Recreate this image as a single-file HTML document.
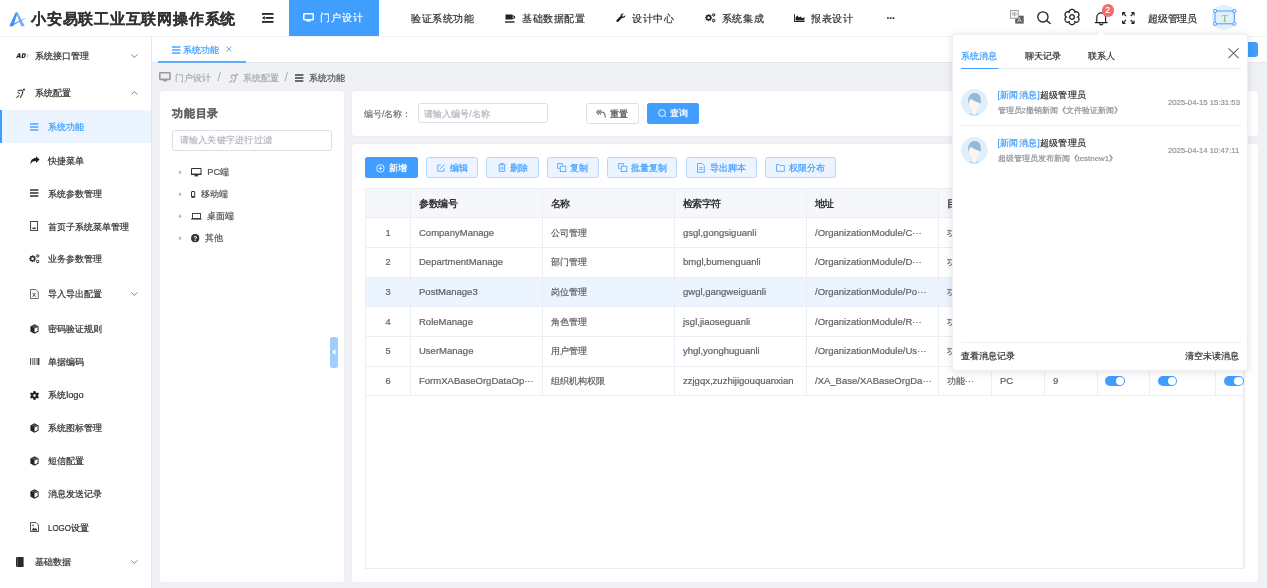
<!DOCTYPE html>
<html><head><meta charset="utf-8">
<style>
*{box-sizing:border-box;margin:0;padding:0}
html,body{width:1267px;height:588px;overflow:hidden;background:#eff1f4;font-family:"Liberation Sans",sans-serif;color:#303133}
.a{position:absolute}
.t{position:absolute;white-space:nowrap;line-height:1;-webkit-text-stroke:0.2px currentColor}
svg{position:absolute;overflow:visible}
#hdr{left:0;top:0;width:1267px;height:37.2px;background:#fff;border-bottom:1.5px solid #f0f2f5}
#side{left:0;top:37.2px;width:152px;height:552px;background:#fff;border-right:1px solid #e6e6e6}
#tabs{left:152px;top:37.2px;width:1115px;height:25.5px;background:#fff;border-bottom:1px solid #e4e7ed}
.card{position:absolute;background:#fff;border-radius:3px;box-shadow:0 0 1.5px rgba(0,0,0,0.07)}
.btn{position:absolute;height:21px;border-radius:2.5px;border:0.7px solid #b3d8ff;background:#ecf5ff}
.hm{font-size:10px;letter-spacing:0.58px;color:#303133}
.sm{font-size:9.24px;color:#303133}
.tb{font-size:9.24px;color:#606266}
.th{font-size:10px;letter-spacing:-0.45px;color:#303133;font-weight:bold;-webkit-text-stroke:0 !important}
.lat{display:inline-block;transform-origin:0 50%}
</style></head><body>

<div class="a" style="left:0;top:0;width:1267px;height:588px;will-change:transform">
<!-- HEADER -->
<div id="hdr" class="a"></div>
<svg style="left:9px;top:11.5px" width="17" height="15" viewBox="0 0 17 15">
  <path d="M0.3 14.3 L6.6 0.6 L8.6 0.6 L4.3 14.3 Z" fill="#3f8ff5"/>
  <path d="M6.8 0.6 L8.6 0.6 L15.8 14.3 L12.2 14.3 Z" fill="#5aa2f7" opacity="0.85"/>
  <path d="M1.2 13.6 C5 11.6 10 8.6 15.8 6.2 L15.9 6.7 C10.5 9.4 6 12.2 2.6 14.3 Z" fill="#3f8ff5"/>
</svg>
<div class="t" style="left:31px;top:10.5px;font-size:15px;letter-spacing:0.78px;font-weight:bold;color:#333">小安易联工业互联网操作系统</div>
<svg style="left:262px;top:13px" width="12" height="10" viewBox="0 0 12 10">
  <rect x="0" y="0" width="11.5" height="1.8" fill="#222"/>
  <rect x="3.5" y="4" width="8" height="1.8" fill="#222"/>
  <rect x="0" y="8" width="11.5" height="1.8" fill="#222"/>
  <path d="M0 4.9 L2.8 3 L2.8 6.8 Z" fill="#222"/>
</svg>
<div class="a" style="left:289px;top:0;width:90px;height:35.7px;background:#409eff"></div>
<svg style="left:303px;top:12.5px" width="11" height="9" viewBox="0 0 11 9">
  <rect x="0.8" y="0.8" width="9.4" height="6" rx="0.6" fill="none" stroke="#fff" stroke-width="1.5"/>
  <rect x="3.5" y="7" width="4" height="1.6" fill="#fff"/>
</svg>
<div class="t hm" style="left:320px;top:12.6px;color:#fff;font-size:10px;letter-spacing:0.9px">门户设计</div>
<div class="t hm" style="left:411px;top:13.8px">验证系统功能</div>
<svg style="left:504.5px;top:13.5px" width="10" height="9" viewBox="0 0 10 9">
  <path d="M0.5 0.5 H7.5 V1.6 H8.6 A1.6 1.6 0 0 1 8.6 4.8 H7.5 V5.6 H0.5 Z M7.5 2.6 V3.8 H8.4 A0.6 0.6 0 0 0 8.4 2.6 Z" fill="#222"/>
  <rect x="0" y="7.3" width="9.5" height="1.4" fill="#222"/>
</svg>
<div class="t hm" style="left:522px;top:13.8px">基础数据配置</div>
<svg style="left:615.5px;top:13px" width="10" height="10" viewBox="0 0 10 10">
  <path d="M9.3 2.2 L7.6 3.6 L6.4 3.4 L6.2 2.2 L7.8 0.6 C6.3 -0.1 4.4 0.9 4.5 2.9 L0.6 6.9 C-0.2 7.7 0.9 9.6 2 8.9 L6 5 C8.1 5.2 9.8 3.8 9.3 2.2 Z" fill="#222"/>
</svg>
<div class="t hm" style="left:632.3px;top:13.8px">设计中心</div>
<svg style="left:704.6px;top:13px" width="11" height="10" viewBox="0 0 11 10"><path d="M3.60 1.10 L4.30 1.17 L4.67 2.11 L5.16 2.37 L6.15 2.15 L6.59 2.70 L6.19 3.63 L6.35 4.15 L7.20 4.70 L7.13 5.40 L6.19 5.77 L5.93 6.26 L6.15 7.25 L5.60 7.69 L4.67 7.29 L4.15 7.45 L3.60 8.30 L2.90 8.23 L2.53 7.29 L2.04 7.03 L1.05 7.25 L0.61 6.70 L1.01 5.77 L0.85 5.25 L0.00 4.70 L0.07 4.00 L1.01 3.63 L1.27 3.14 L1.05 2.15 L1.60 1.71 L2.53 2.11 L3.05 1.95Z M4.90 4.70 A1.3 1.3 0 1 0 2.30 4.70 A1.3 1.3 0 1 0 4.90 4.70 Z" fill="#222" fill-rule="evenodd"/><path d="M8.70 0.10 L9.17 0.16 L9.38 0.73 L9.65 0.95 L10.26 1.00 L10.44 1.43 L10.05 1.90 L10.00 2.25 L10.26 2.80 L9.97 3.17 L9.38 3.07 L9.05 3.20 L8.70 3.70 L8.23 3.64 L8.03 3.07 L7.75 2.85 L7.14 2.80 L6.96 2.37 L7.35 1.90 L7.40 1.55 L7.14 1.00 L7.43 0.63 L8.02 0.73 L8.35 0.60Z M9.35 1.90 A0.65 0.65 0 1 0 8.05 1.90 A0.65 0.65 0 1 0 9.35 1.90 Z" fill="#222" fill-rule="evenodd"/><path d="M8.70 5.70 L9.17 5.76 L9.38 6.33 L9.65 6.55 L10.26 6.60 L10.44 7.03 L10.05 7.50 L10.00 7.85 L10.26 8.40 L9.97 8.77 L9.38 8.67 L9.05 8.80 L8.70 9.30 L8.23 9.24 L8.03 8.67 L7.75 8.45 L7.14 8.40 L6.96 7.97 L7.35 7.50 L7.40 7.15 L7.14 6.60 L7.43 6.23 L8.02 6.33 L8.35 6.20Z M9.35 7.50 A0.65 0.65 0 1 0 8.05 7.50 A0.65 0.65 0 1 0 9.35 7.50 Z" fill="#222" fill-rule="evenodd"/></svg>
<div class="t hm" style="left:721.8px;top:13.8px">系统集成</div>
<svg style="left:794px;top:13.5px" width="11" height="8" viewBox="0 0 11 8">
  <path d="M0 0 H0.9 V7 H10.6 V8 H0 Z" fill="#222"/>
  <path d="M1.6 6.6 V3.2 L3.4 1.6 L5 3.4 L6.6 2.6 L8.4 4.2 L10.4 3 V6.6 Z" fill="#222"/>
</svg>
<div class="t hm" style="left:811.3px;top:13.8px">报表设计</div>
<div class="t" style="left:886.5px;top:14px;font-size:10px;font-weight:bold;color:#333;letter-spacing:-0.6px">···</div>

<!-- header right icons -->
<svg style="left:1010px;top:10.3px" width="14" height="14" viewBox="0 0 14 14">
  <rect x="5.2" y="5.7" width="8.5" height="7.9" fill="#5d5f63"/>
  <path d="M9.45 7.4 L7.6 12.2 M9.45 7.4 L11.3 12.2 M8.3 10.6 H10.6" stroke="#e8e8e8" stroke-width="0.7"/>
  <rect x="0.6" y="0.6" width="7.6" height="7.6" fill="#fff" stroke="#9a9a9a" stroke-width="1"/>
  <path d="M2.6 3 H6.2 V5 H2.6 Z M4.4 1.9 V6.6" fill="none" stroke="#8a9ab0" stroke-width="0.7"/>
</svg>
<svg style="left:1037px;top:10.8px" width="14" height="13" viewBox="0 0 14 13">
  <circle cx="5.9" cy="5.9" r="5.1" fill="none" stroke="#222" stroke-width="1.3"/>
  <path d="M9.6 9.4 L13.2 12.6" stroke="#222" stroke-width="1.3" stroke-linecap="round"/>
</svg>
<svg style="left:1064px;top:9px" width="16" height="16" viewBox="0 0 16 16"><path d="M8.00 0.40 L8.26 0.41 L8.53 0.45 L8.79 0.50 L9.04 0.58 L9.29 0.69 L9.53 0.81 L9.75 0.96 L9.97 1.13 L10.17 1.33 L10.35 1.54 L10.51 1.79 L10.65 2.06 L10.75 2.36 L10.80 2.73 L10.65 3.41 L11.16 2.94 L11.51 2.80 L11.82 2.74 L12.13 2.72 L12.42 2.74 L12.70 2.79 L12.96 2.86 L13.22 2.96 L13.46 3.08 L13.69 3.23 L13.90 3.39 L14.10 3.57 L14.28 3.77 L14.44 3.98 L14.58 4.20 L14.70 4.44 L14.81 4.68 L14.89 4.93 L14.94 5.19 L14.98 5.46 L14.99 5.73 L14.97 6.00 L14.93 6.27 L14.86 6.54 L14.77 6.81 L14.64 7.07 L14.47 7.32 L14.25 7.56 L13.96 7.79 L13.30 8.00 L13.96 8.21 L14.25 8.44 L14.47 8.68 L14.64 8.93 L14.77 9.19 L14.86 9.46 L14.93 9.73 L14.97 10.00 L14.99 10.27 L14.98 10.54 L14.94 10.81 L14.89 11.07 L14.81 11.32 L14.70 11.56 L14.58 11.80 L14.44 12.02 L14.28 12.23 L14.10 12.43 L13.90 12.61 L13.69 12.77 L13.46 12.92 L13.22 13.04 L12.96 13.14 L12.70 13.21 L12.42 13.26 L12.13 13.28 L11.82 13.26 L11.51 13.20 L11.16 13.06 L10.65 12.59 L10.80 13.27 L10.75 13.64 L10.65 13.94 L10.51 14.21 L10.35 14.46 L10.17 14.67 L9.97 14.87 L9.75 15.04 L9.53 15.19 L9.29 15.31 L9.04 15.42 L8.79 15.50 L8.53 15.55 L8.26 15.59 L8.00 15.60 L7.74 15.59 L7.47 15.55 L7.21 15.50 L6.96 15.42 L6.71 15.31 L6.47 15.19 L6.25 15.04 L6.03 14.87 L5.83 14.67 L5.65 14.46 L5.49 14.21 L5.35 13.94 L5.25 13.64 L5.20 13.27 L5.35 12.59 L4.84 13.06 L4.49 13.20 L4.18 13.26 L3.87 13.28 L3.58 13.26 L3.30 13.21 L3.04 13.14 L2.78 13.04 L2.54 12.92 L2.31 12.77 L2.10 12.61 L1.90 12.43 L1.72 12.23 L1.56 12.02 L1.42 11.80 L1.30 11.56 L1.19 11.32 L1.11 11.07 L1.06 10.81 L1.02 10.54 L1.01 10.27 L1.03 10.00 L1.07 9.73 L1.14 9.46 L1.23 9.19 L1.36 8.93 L1.53 8.68 L1.75 8.44 L2.04 8.21 L2.70 8.00 L2.04 7.79 L1.75 7.56 L1.53 7.32 L1.36 7.07 L1.23 6.81 L1.14 6.54 L1.07 6.27 L1.03 6.00 L1.01 5.73 L1.02 5.46 L1.06 5.19 L1.11 4.93 L1.19 4.68 L1.30 4.44 L1.42 4.20 L1.56 3.98 L1.72 3.77 L1.90 3.57 L2.10 3.39 L2.31 3.23 L2.54 3.08 L2.78 2.96 L3.04 2.86 L3.30 2.79 L3.58 2.74 L3.87 2.72 L4.18 2.74 L4.49 2.80 L4.84 2.94 L5.35 3.41 L5.20 2.73 L5.25 2.36 L5.35 2.06 L5.49 1.79 L5.65 1.54 L5.83 1.33 L6.03 1.13 L6.25 0.96 L6.47 0.81 L6.71 0.69 L6.96 0.58 L7.21 0.50 L7.47 0.45 L7.74 0.41 L8.00 0.40Z" fill="none" stroke="#222" stroke-width="1.3" stroke-linejoin="round"/><circle cx="8" cy="8" r="2.3" fill="none" stroke="#222" stroke-width="1.3"/></svg>
<svg style="left:1094.5px;top:11px" width="13" height="14" viewBox="0 0 13 14">
  <path d="M1.8 11.5 V6.2 A4.4 4.4 0 0 1 10.6 6.2 V11.5 M0.3 11.6 H12.2" fill="none" stroke="#222" stroke-width="1.2" stroke-linecap="round"/>
  <path d="M4.6 12.2 A1.6 1.6 0 0 0 7.8 12.2" fill="none" stroke="#222" stroke-width="1.2"/>
</svg>
<div class="a" style="left:1101.8px;top:4.4px;width:12.3px;height:12.3px;border-radius:50%;background:#f56c6c"></div>
<div class="t" style="left:1105.3px;top:6.3px;font-size:8.6px;color:#fff">2</div>
<svg style="left:1122px;top:11.5px" width="13" height="12" viewBox="0 0 13 12">
  <path d="M0.6 0.6 L4 4 M0.6 0.6 H3.4 M0.6 0.6 V3.4 M12.1 0.6 L8.7 4 M12.1 0.6 H9.3 M12.1 0.6 V3.4 M0.6 11.4 L4 8 M0.6 11.4 H3.4 M0.6 11.4 V8.6 M12.1 11.4 L8.7 8 M12.1 11.4 H9.3 M12.1 11.4 V8.6" fill="none" stroke="#222" stroke-width="1.1"/>
</svg>
<div class="t sm" style="left:1148px;top:13.5px;font-size:10px;letter-spacing:-0.25px">超级管理员</div>
<div class="a" style="left:1211.6px;top:4.9px;width:24.8px;height:24.8px;border-radius:50%;background:#e3effc"></div>
<svg style="left:1212.6px;top:9.3px" width="23" height="17" viewBox="0 0 23 17">
  <rect x="2" y="2" width="19.3" height="12.8" fill="none" stroke="#409eff" stroke-width="1"/>
  <circle cx="2" cy="2" r="1.7" fill="#e3effc" stroke="#409eff" stroke-width="0.9"/>
  <circle cx="21.3" cy="2" r="1.7" fill="#e3effc" stroke="#409eff" stroke-width="0.9"/>
  <circle cx="2" cy="14.8" r="1.7" fill="#e3effc" stroke="#409eff" stroke-width="0.9"/>
  <circle cx="21.3" cy="14.8" r="1.7" fill="#e3effc" stroke="#409eff" stroke-width="0.9"/>
  <text x="11.6" y="12.6" font-size="10.5" text-anchor="middle" fill="#72c76e" font-family="Liberation Serif">T</text>
</svg>

<!-- SIDEBAR -->
<div id="side" class="a"></div>
<div class="a" style="left:0;top:110px;width:151px;height:32.6px;background:#ecf5ff"></div>
<div class="a" style="left:0;top:110px;width:2.2px;height:32.6px;background:#409eff"></div>
<div class="t sm" style="left:34.9px;top:51.80px;color:#303133">系统接口管理</div>
<svg style="left:15.5px;top:52.80px" width="12" height="6" viewBox="0 0 12 6"><path d="M0 5 L2.6 0.2 H4.2 L4.6 5 H3.3 L3.2 4 H1.9 L1.4 5 Z M2.3 3.1 H3.1 L3 1.5 Z" fill="#222"/><path d="M5.4 5 L6.3 0.2 H8.2 C9.8 0.2 10 1.6 9.6 2.7 C9.2 4 8.4 5 6.9 5 Z M6.8 3.9 H7.3 C8 3.9 8.3 3.3 8.4 2.6 C8.5 1.8 8.3 1.3 7.7 1.3 H7.4 Z" fill="#222"/><path d="M10.6 0.8 A2.4 2.4 0 0 1 10.6 4.4" fill="none" stroke="#aaa" stroke-width="0.7"/><path d="M11.5 0.6 A2.8 2.8 0 0 1 11.5 4.6" fill="none" stroke="#ccc" stroke-width="0.6"/></svg>
<svg style="left:130.8px;top:53.50px" width="7" height="4" viewBox="0 0 7 4"><path d="M0.4 0.4 L3.4 3.4 L6.4 0.4" fill="none" stroke="#666" stroke-width="0.8"/></svg>
<div class="t sm" style="left:34.9px;top:89.10px;color:#303133">系统配置</div>
<svg style="left:15.5px;top:87.80px" width="10" height="10" viewBox="0 0 10 10"><circle cx="8" cy="1.6" r="1.1" fill="#444"/><path d="M2.2 2.8 C4 2 6 2 6.8 3.2 C7 5.2 5.6 7.6 4.4 9.4 M2 4.4 L3.4 5.6 M0.8 9.4 L2.8 7.6" fill="none" stroke="#444" stroke-width="1.1" stroke-linecap="round"/></svg>
<svg style="left:130.8px;top:90.60px" width="7" height="4" viewBox="0 0 7 4"><path d="M0.4 3.6 L3.4 0.6 L6.4 3.6" fill="none" stroke="#666" stroke-width="0.8"/></svg>
<div class="t sm" style="left:48.2px;top:123.40px;color:#409eff">系统功能</div>
<svg style="left:30.3px;top:123.1px" width="9" height="8" viewBox="0 0 9 8"><rect x="0" y="0.3" width="8.4" height="1.4" fill="#409eff"/><rect x="0" y="3.3" width="8.4" height="1.4" fill="#409eff"/><rect x="0" y="6.3" width="8.4" height="1.4" fill="#409eff"/></svg>
<div class="t sm" style="left:48.2px;top:156.60px;color:#303133">快捷菜单</div>
<svg style="left:30.0px;top:155.80px" width="10" height="9" viewBox="0 0 10 9"><path d="M9.6 3.6 L6 0.2 V2.1 C2.4 2.1 0.4 4.2 0.4 8.6 C1.4 6.2 3 5.1 6 5.1 V7 Z" fill="#222"/></svg>
<div class="t sm" style="left:48.2px;top:189.50px;color:#303133">系统参数管理</div>
<svg style="left:30.3px;top:189.2px" width="9" height="8" viewBox="0 0 9 8"><rect x="0" y="0.3" width="8.4" height="1.4" fill="#222"/><rect x="0" y="3.3" width="8.4" height="1.4" fill="#222"/><rect x="0" y="6.3" width="8.4" height="1.4" fill="#222"/></svg>
<div class="t sm" style="left:48.2px;top:222.50px;color:#303133">首页子系统菜单管理</div>
<svg style="left:30.0px;top:221.20px" width="9" height="10" viewBox="0 0 9 10"><rect x="0.6" y="0.5" width="7" height="9" fill="none" stroke="#333" stroke-width="0.9"/><rect x="2.4" y="6.6" width="3.4" height="1.4" fill="#333"/></svg>
<div class="t sm" style="left:48.2px;top:255.40px;color:#303133">业务参数管理</div>
<svg style="left:29.1px;top:253.80px" width="11" height="10" viewBox="0 0 11 10"><path d="M3.60 1.10 L4.30 1.17 L4.67 2.11 L5.16 2.37 L6.15 2.15 L6.59 2.70 L6.19 3.63 L6.35 4.15 L7.20 4.70 L7.13 5.40 L6.19 5.77 L5.93 6.26 L6.15 7.25 L5.60 7.69 L4.67 7.29 L4.15 7.45 L3.60 8.30 L2.90 8.23 L2.53 7.29 L2.04 7.03 L1.05 7.25 L0.61 6.70 L1.01 5.77 L0.85 5.25 L0.00 4.70 L0.07 4.00 L1.01 3.63 L1.27 3.14 L1.05 2.15 L1.60 1.71 L2.53 2.11 L3.05 1.95Z M4.90 4.70 A1.3 1.3 0 1 0 2.30 4.70 A1.3 1.3 0 1 0 4.90 4.70 Z" fill="#333" fill-rule="evenodd"/><path d="M8.70 0.10 L9.17 0.16 L9.38 0.73 L9.65 0.95 L10.26 1.00 L10.44 1.43 L10.05 1.90 L10.00 2.25 L10.26 2.80 L9.97 3.17 L9.38 3.07 L9.05 3.20 L8.70 3.70 L8.23 3.64 L8.03 3.07 L7.75 2.85 L7.14 2.80 L6.96 2.37 L7.35 1.90 L7.40 1.55 L7.14 1.00 L7.43 0.63 L8.02 0.73 L8.35 0.60Z M9.35 1.90 A0.65 0.65 0 1 0 8.05 1.90 A0.65 0.65 0 1 0 9.35 1.90 Z" fill="#333" fill-rule="evenodd"/><path d="M8.70 5.70 L9.17 5.76 L9.38 6.33 L9.65 6.55 L10.26 6.60 L10.44 7.03 L10.05 7.50 L10.00 7.85 L10.26 8.40 L9.97 8.77 L9.38 8.67 L9.05 8.80 L8.70 9.30 L8.23 9.24 L8.03 8.67 L7.75 8.45 L7.14 8.40 L6.96 7.97 L7.35 7.50 L7.40 7.15 L7.14 6.60 L7.43 6.23 L8.02 6.33 L8.35 6.20Z M9.35 7.50 A0.65 0.65 0 1 0 8.05 7.50 A0.65 0.65 0 1 0 9.35 7.50 Z" fill="#333" fill-rule="evenodd"/></svg>
<div class="t sm" style="left:48.2px;top:290.30px;color:#303133">导入导出配置</div>
<svg style="left:30.0px;top:289.00px" width="9" height="10" viewBox="0 0 9 10"><path d="M0.5 0.5 H5.8 L8.3 3 V9.5 H0.5 Z" fill="none" stroke="#444" stroke-width="0.8"/><path d="M2.6 3.8 L5.6 7.8 M5.6 3.8 L2.6 7.8" stroke="#444" stroke-width="0.9"/></svg>
<svg style="left:130.8px;top:292.00px" width="7" height="4" viewBox="0 0 7 4"><path d="M0.4 0.4 L3.4 3.4 L6.4 0.4" fill="none" stroke="#666" stroke-width="0.8"/></svg>
<div class="t sm" style="left:48.2px;top:324.90px;color:#303133">密码验证规则</div>
<svg style="left:30.0px;top:323.60px" width="9" height="10" viewBox="0 0 9 10"><path d="M4.5 0.3 L8.6 2.4 V7.6 L4.5 9.7 L0.4 7.6 V2.4 Z" fill="#222"/><path d="M4.5 4.6 V8.6 L7.6 7 V3 Z" fill="#fff"/><path d="M1.4 2.6 L4.5 1.2 L7.6 2.6 L4.5 4 Z" fill="#fff" opacity="0.25"/></svg>
<div class="t sm" style="left:48.2px;top:358.10px;color:#303133">单据编码</div>
<svg style="left:30.0px;top:358.30px" width="10" height="7" viewBox="0 0 10 7"><rect x="0" y="0" width="1" height="7" fill="#555"/><rect x="1.8" y="0" width="1" height="7" fill="#777"/><rect x="3.6" y="0" width="1.2" height="7" fill="#666"/><rect x="5.6" y="0" width="1" height="7" fill="#888"/><rect x="7.4" y="0" width="2" height="7" fill="#444"/></svg>
<div class="t sm" style="left:48.2px;top:391.30px;color:#303133">系统logo</div>
<svg style="left:30.0px;top:390.50px" width="9" height="9" viewBox="0 0 9 9"><path d="M3.6 0 H5.4 L5.7 1.4 L6.8 2 L8.1 1.5 L9 3.1 L8 4 V5 L9 5.9 L8.1 7.5 L6.8 7 L5.7 7.6 L5.4 9 H3.6 L3.3 7.6 L2.2 7 L0.9 7.5 L0 5.9 L1 5 V4 L0 3.1 L0.9 1.5 L2.2 2 L3.3 1.4 Z" fill="#222"/><circle cx="4.5" cy="4.5" r="1.3" fill="#fff"/></svg>
<div class="t sm" style="left:48.2px;top:424.30px;color:#303133">系统图标管理</div>
<svg style="left:30.0px;top:423.00px" width="9" height="10" viewBox="0 0 9 10"><path d="M4.5 0.3 L8.6 2.4 V7.6 L4.5 9.7 L0.4 7.6 V2.4 Z" fill="#222"/><path d="M4.5 4.6 V8.6 L7.6 7 V3 Z" fill="#fff"/><path d="M1.4 2.6 L4.5 1.2 L7.6 2.6 L4.5 4 Z" fill="#fff" opacity="0.25"/></svg>
<div class="t sm" style="left:48.2px;top:457.40px;color:#303133">短信配置</div>
<svg style="left:30.0px;top:456.10px" width="9" height="10" viewBox="0 0 9 10"><path d="M4.5 0.3 L8.6 2.4 V7.6 L4.5 9.7 L0.4 7.6 V2.4 Z" fill="#222"/><path d="M4.5 4.6 V8.6 L7.6 7 V3 Z" fill="#fff"/><path d="M1.4 2.6 L4.5 1.2 L7.6 2.6 L4.5 4 Z" fill="#fff" opacity="0.25"/></svg>
<div class="t sm" style="left:48.2px;top:490.40px;color:#303133">消息发送记录</div>
<svg style="left:30.0px;top:489.10px" width="9" height="10" viewBox="0 0 9 10"><path d="M4.5 0.3 L8.6 2.4 V7.6 L4.5 9.7 L0.4 7.6 V2.4 Z" fill="#222"/><path d="M4.5 4.6 V8.6 L7.6 7 V3 Z" fill="#fff"/><path d="M1.4 2.6 L4.5 1.2 L7.6 2.6 L4.5 4 Z" fill="#fff" opacity="0.25"/></svg>
<div class="t sm" style="left:48.2px;top:523.50px;color:#303133"><span class="lat" style="transform:scaleX(0.86);margin-right:-3.8px">LOGO</span>设置</div>
<svg style="left:30.0px;top:522.20px" width="9" height="10" viewBox="0 0 9 10"><path d="M0.5 0.5 H6 L8.5 3 V9.5 H0.5 Z" fill="none" stroke="#444" stroke-width="0.9"/><path d="M1.5 8.5 L3.5 5.5 L5 7 L6 6 L7.5 8.5 Z" fill="#333"/><circle cx="3" cy="3.2" r="0.8" fill="#333"/></svg>
<div class="t sm" style="left:34.9px;top:558.30px;color:#303133">基础数据</div>
<svg style="left:15.5px;top:557.00px" width="8" height="10" viewBox="0 0 8 10"><path d="M1.2 0 H7.6 V10 H1.2 C0.4 10 0 9.5 0 8.8 V1.2 C0 0.5 0.4 0 1.2 0 Z" fill="#2a2a2a"/><rect x="1.2" y="0.6" width="0.6" height="8.8" fill="#777"/></svg>
<svg style="left:130.8px;top:560.00px" width="7" height="4" viewBox="0 0 7 4"><path d="M0.4 0.4 L3.4 3.4 L6.4 0.4" fill="none" stroke="#666" stroke-width="0.8"/></svg>

<!-- TABS -->
<div id="tabs" class="a"></div>
<svg style="left:171.5px;top:46.3px" width="9" height="8" viewBox="0 0 9 8"><rect x="0" y="0.3" width="8.4" height="1.4" fill="#409eff"/><rect x="0" y="3.3" width="8.4" height="1.4" fill="#409eff"/><rect x="0" y="6.3" width="8.4" height="1.4" fill="#409eff"/></svg>
<div class="t sm" style="left:183px;top:46.2px;font-size:9.24px;color:#409eff">系统功能</div>
<svg style="left:226px;top:45.5px" width="6" height="6" viewBox="0 0 6 6"><path d="M0.5 0.5 L5.5 5.5 M5.5 0.5 L0.5 5.5" stroke="#409eff" stroke-width="0.8"/></svg>
<div class="a" style="left:158.3px;top:61px;width:87.3px;height:2px;background:#5eacff"></div>
<div class="a" style="left:1220px;top:41.8px;width:38.3px;height:15.5px;border-radius:3px;background:#409eff"></div>

<!-- CONTENT -->
<svg style="left:159.4px;top:72.4px" width="12" height="10" viewBox="0 0 12 10"><rect x="0.8" y="0.8" width="10.2" height="6.6" rx="0.5" fill="#eceef1" stroke="#9a9a9a" stroke-width="1.6"/><rect x="4" y="7.8" width="4" height="1.6" fill="#9a9a9a"/></svg>
<div class="t sm" style="left:175.2px;top:73.7px;color:#a8abb2">门户设计</div>
<div class="t" style="left:217.4px;top:71.4px;font-size:12.5px;color:#a9acb1;-webkit-text-stroke:0">/</div>
<svg style="left:228.5px;top:72.5px" width="10" height="10" viewBox="0 0 10 10"><circle cx="8" cy="1.6" r="1.1" fill="#a5a5a5"/><path d="M2.2 2.8 C4 2 6 2 6.8 3.2 C7 5.2 5.6 7.6 4.4 9.4 M2 4.4 L3.4 5.6 M0.8 9.4 L2.8 7.6" fill="none" stroke="#a5a5a5" stroke-width="1.1" stroke-linecap="round"/></svg>
<div class="t sm" style="left:243.2px;top:73.7px;color:#a8abb2">系统配置</div>
<div class="t" style="left:284.4px;top:71.4px;font-size:12.5px;color:#a9acb1;-webkit-text-stroke:0">/</div>
<svg style="left:295.4px;top:73.5px" width="9" height="8" viewBox="0 0 9 8"><rect x="0" y="0.3" width="8.4" height="1.4" fill="#333"/><rect x="0" y="3.3" width="8.4" height="1.4" fill="#333"/><rect x="0" y="6.3" width="8.4" height="1.4" fill="#333"/></svg>
<div class="t sm" style="left:309.1px;top:73.7px;color:#505256">系统功能</div>
<div class="card" style="left:160px;top:90.8px;width:184px;height:491.2px"></div>
<div class="t" style="left:172.4px;top:107.8px;font-size:11px;letter-spacing:0.6px;font-weight:bold;color:#606266">功能目录</div>
<div class="a" style="left:172.4px;top:130.3px;width:159.4px;height:20.4px;border:0.8px solid #dcdfe6;border-radius:2.5px;background:#fff"></div>
<div class="t sm" style="left:179.8px;top:136.2px;font-size:9px;letter-spacing:0.22px;color:#b4b7bd">请输入关键字进行过滤</div>
<svg style="left:179.2px;top:169.80px" width="3" height="5" viewBox="0 0 3 5"><path d="M0 0 L2.8 2.2 L0 4.4 Z" fill="#b5b8bd"/></svg>
<svg style="left:191px;top:168.20px" width="11" height="9" viewBox="0 0 11 9"><path d="M0.5 0.5 H10 V6.4 H0.5 Z" fill="none" stroke="#333" stroke-width="1"/><rect x="0" y="5.6" width="10.5" height="1.4" fill="#333"/><rect x="3.5" y="7" width="3.6" height="1.4" fill="#333"/></svg>
<div class="t tb" style="left:207.3px;top:168.30px;color:#505256">PC端</div>
<svg style="left:179.2px;top:191.60px" width="3" height="5" viewBox="0 0 3 5"><path d="M0 0 L2.8 2.2 L0 4.4 Z" fill="#b5b8bd"/></svg>
<svg style="left:191.3px;top:190.90px" width="5" height="7" viewBox="0 0 5 7"><rect x="0.5" y="0.5" width="3.2" height="5.8" rx="0.5" fill="none" stroke="#333" stroke-width="1"/><rect x="0.5" y="5" width="3.2" height="1.3" fill="#333"/></svg>
<div class="t tb" style="left:200.9px;top:190.10px;color:#505256">移动端</div>
<svg style="left:179.2px;top:213.80px" width="3" height="5" viewBox="0 0 3 5"><path d="M0 0 L2.8 2.2 L0 4.4 Z" fill="#b5b8bd"/></svg>
<svg style="left:191.2px;top:212.80px" width="11" height="7" viewBox="0 0 11 7"><rect x="1.5" y="0.5" width="8" height="5" fill="none" stroke="#333" stroke-width="0.9"/><rect x="0" y="5.6" width="10.6" height="1" fill="#333"/></svg>
<div class="t tb" style="left:207.3px;top:212.30px;color:#505256">桌面端</div>
<svg style="left:179.2px;top:235.50px" width="3" height="5" viewBox="0 0 3 5"><path d="M0 0 L2.8 2.2 L0 4.4 Z" fill="#b5b8bd"/></svg>
<svg style="left:191.2px;top:233.70px" width="8.4" height="8.4" viewBox="0 0 8.4 8.4"><circle cx="4.2" cy="4.2" r="4.1" fill="#333"/><text x="4.2" y="7" font-size="6.5" font-weight="bold" text-anchor="middle" fill="#fff" font-family="Liberation Sans">?</text></svg>
<div class="t tb" style="left:205px;top:234.00px;color:#505256">其他</div>
<div class="a" style="left:330.1px;top:336.5px;width:7.7px;height:31.5px;border-radius:2.5px;background:#a0cfff"></div>
<svg style="left:332px;top:349px" width="4" height="6" viewBox="0 0 4 6"><path d="M3.5 0 L0 3 L3.5 6 Z" fill="#fff"/></svg>
<div class="card" style="left:352px;top:90.8px;width:906px;height:44.9px"></div>
<div class="t sm" style="left:363.9px;top:110.4px;font-size:8.85px;color:#65676b;-webkit-text-stroke:0.1px #65676b">编号/名称：</div>
<div class="a" style="left:417.6px;top:103.3px;width:130.8px;height:20.2px;border:0.8px solid #dcdfe6;border-radius:2.5px;background:#fff"></div>
<div class="t sm" style="left:424.2px;top:109.9px;font-size:8.6px;color:#b4b7bd">请输入编号/名称</div>
<div class="a" style="left:586.2px;top:103.2px;width:52.4px;height:20.5px;border:0.8px solid #dcdfe6;border-radius:2.5px;background:#fff"></div>
<svg style="left:596.3px;top:108.8px" width="10" height="9" viewBox="0 0 10 9"><path d="M2.8 0.8 L0.6 3.2 L2.8 5.6 M5 0.8 L2.8 3.2 L5 5.6 M2.8 3.2 H6 C8.2 3.2 9.2 4.8 9.2 8.4" fill="none" stroke="#777" stroke-width="1.2" stroke-linejoin="round"/></svg>
<div class="t sm" style="left:609.8px;top:109.5px;font-size:8.6px;color:#505256;-webkit-text-stroke:0.25px #505256">重置</div>
<div class="a" style="left:646.8px;top:102.9px;width:52.6px;height:21.1px;border-radius:2.5px;background:#409eff"></div>
<svg style="left:657.8px;top:108.6px" width="9" height="9" viewBox="0 0 9 9"><circle cx="4" cy="4" r="3.4" fill="none" stroke="#fff" stroke-width="0.9"/><path d="M6.5 6.5 L8.3 8.3" stroke="#fff" stroke-width="0.9"/></svg>
<div class="t sm" style="left:670.4px;top:109.3px;font-size:8.6px;color:#fff;-webkit-text-stroke:0.25px #fff">查询</div>
<div class="card" style="left:352px;top:144px;width:906px;height:438px"></div>
<div class="a" style="left:365px;top:157px;width:52.6px;height:21.1px;border-radius:2.5px;background:#409eff"></div>
<svg style="left:375.8px;top:163.5px" width="9" height="9" viewBox="0 0 9 9"><circle cx="4.4" cy="4.4" r="3.8" fill="none" stroke="#fff" stroke-width="0.8"/><path d="M4.4 2.4 V6.4 M2.4 4.4 H6.4" stroke="#fff" stroke-width="0.8"/></svg>
<div class="t sm" style="left:388.7px;top:163.7px;font-size:8.6px;color:#fff;-webkit-text-stroke:0.25px #fff">新增</div>
<div class="btn" style="left:425.7px;top:157px;width:52.7px"></div>
<svg style="left:437px;top:163.5px" width="8" height="8" viewBox="0 0 8 8"><path d="M4 1 H0.8 V7.2 H7 V4" fill="none" stroke="#409eff" stroke-width="0.8"/><path d="M3.2 4.8 L7.4 0.6" stroke="#409eff" stroke-width="0.9"/></svg>
<div class="t sm" style="left:450px;top:163.7px;font-size:8.6px;color:#4aa3ff;-webkit-text-stroke:0.25px #4aa3ff">编辑</div>
<div class="btn" style="left:486.3px;top:157px;width:52.5px"></div>
<svg style="left:498px;top:163px" width="8" height="9" viewBox="0 0 8 9"><path d="M0.3 1.8 H7.5 M2.6 1.8 V0.5 H5.2 V1.8 M1.2 1.8 V8.4 H6.6 V1.8 M3 3.6 V6.8 M4.8 3.6 V6.8" fill="none" stroke="#409eff" stroke-width="0.8"/></svg>
<div class="t sm" style="left:510.4px;top:163.7px;font-size:8.6px;color:#4aa3ff;-webkit-text-stroke:0.25px #4aa3ff">删除</div>
<div class="btn" style="left:547.2px;top:157px;width:51.6px"></div>
<svg style="left:557.4px;top:163px" width="10" height="9" viewBox="0 0 10 9"><path d="M2.6 5.4 H0.6 V0.6 H5.4 V2.6" fill="none" stroke="#409eff" stroke-width="0.8"/><rect x="3.2" y="3.2" width="5.6" height="5.4" fill="none" stroke="#409eff" stroke-width="0.8"/></svg>
<div class="t sm" style="left:570.3px;top:163.7px;font-size:8.6px;color:#4aa3ff;-webkit-text-stroke:0.25px #4aa3ff">复制</div>
<div class="btn" style="left:607.3px;top:157px;width:70.1px"></div>
<svg style="left:617.7px;top:163px" width="10" height="9" viewBox="0 0 10 9"><path d="M2.6 5.4 H0.6 V0.6 H5.4 V2.6" fill="none" stroke="#409eff" stroke-width="0.8"/><rect x="3.2" y="3.2" width="5.6" height="5.4" fill="none" stroke="#409eff" stroke-width="0.8"/></svg>
<div class="t sm" style="left:630.7px;top:163.7px;font-size:8.6px;color:#4aa3ff;-webkit-text-stroke:0.25px #4aa3ff">批量复制</div>
<div class="btn" style="left:685.7px;top:157px;width:71.0px"></div>
<svg style="left:697px;top:162.8px" width="8" height="10" viewBox="0 0 8 10"><path d="M0.5 0.5 H5 L7.3 2.8 V9.3 H0.5 Z" fill="none" stroke="#409eff" stroke-width="0.8"/><path d="M2 4.6 H5.8 M2 6.4 H5.8" stroke="#409eff" stroke-width="0.7"/></svg>
<div class="t sm" style="left:709.8px;top:163.7px;font-size:8.6px;color:#4aa3ff;-webkit-text-stroke:0.25px #4aa3ff">导出脚本</div>
<div class="btn" style="left:765.2px;top:157px;width:70.6px"></div>
<svg style="left:775.9px;top:163.6px" width="9" height="8" viewBox="0 0 9 8"><path d="M0.5 0.6 H3.4 L4.2 1.6 H8.3 V7.3 H0.5 Z" fill="none" stroke="#409eff" stroke-width="0.8"/></svg>
<div class="t sm" style="left:788.7px;top:163.7px;font-size:8.6px;color:#4aa3ff;-webkit-text-stroke:0.25px #4aa3ff">权限分布</div>
<div class="a" style="left:365.3px;top:188.3px;width:879.0px;height:380.4px;border:0.8px solid #ebeef5;background:#fff;overflow:hidden" id="tbl"></div>
<div class="a" style="left:365.3px;top:188.3px;width:879.0px;height:29.3px;background:#f5f7fa"></div>
<div class="a" style="left:365.3px;top:277.0px;width:879.0px;height:29.7px;background:#ecf5ff"></div>
<div class="a" style="left:365.3px;top:187.9px;width:879.0px;height:0.8px;background:#ebeef5"></div>
<div class="a" style="left:365.3px;top:217.2px;width:879.0px;height:0.8px;background:#ebeef5"></div>
<div class="a" style="left:365.3px;top:246.9px;width:879.0px;height:0.8px;background:#ebeef5"></div>
<div class="a" style="left:365.3px;top:276.6px;width:879.0px;height:0.8px;background:#ebeef5"></div>
<div class="a" style="left:365.3px;top:306.3px;width:879.0px;height:0.8px;background:#ebeef5"></div>
<div class="a" style="left:365.3px;top:336.0px;width:879.0px;height:0.8px;background:#ebeef5"></div>
<div class="a" style="left:365.3px;top:365.7px;width:879.0px;height:0.8px;background:#ebeef5"></div>
<div class="a" style="left:365.3px;top:395.4px;width:879.0px;height:0.8px;background:#ebeef5"></div>
<div class="a" style="left:364.9px;top:188.3px;width:0.8px;height:207.5px;background:#ebeef5"></div>
<div class="a" style="left:410.3px;top:188.3px;width:0.8px;height:207.5px;background:#ebeef5"></div>
<div class="a" style="left:542.0px;top:188.3px;width:0.8px;height:207.5px;background:#ebeef5"></div>
<div class="a" style="left:673.8px;top:188.3px;width:0.8px;height:207.5px;background:#ebeef5"></div>
<div class="a" style="left:806.0px;top:188.3px;width:0.8px;height:207.5px;background:#ebeef5"></div>
<div class="a" style="left:938.0px;top:188.3px;width:0.8px;height:207.5px;background:#ebeef5"></div>
<div class="a" style="left:991.1px;top:188.3px;width:0.8px;height:207.5px;background:#ebeef5"></div>
<div class="a" style="left:1044.2px;top:188.3px;width:0.8px;height:207.5px;background:#ebeef5"></div>
<div class="a" style="left:1097.1px;top:188.3px;width:0.8px;height:207.5px;background:#ebeef5"></div>
<div class="a" style="left:1149.1px;top:188.3px;width:0.8px;height:207.5px;background:#ebeef5"></div>
<div class="a" style="left:1215.1px;top:188.3px;width:0.8px;height:207.5px;background:#ebeef5"></div>
<div class="a" style="left:364.90000000000003px;top:188.3px;width:0.8px;height:380.4px;background:#ebeef5"></div>
<div class="a" style="left:1243.8999999999999px;top:188.3px;width:0.8px;height:380.4px;background:#ebeef5"></div>
<div class="a" style="left:365.3px;top:568.3000000000001px;width:879.0px;height:0.8px;background:#ebeef5"></div>
<div class="t th" style="left:419.1px;top:198.6px">参数编号</div>
<div class="t th" style="left:550.8px;top:198.6px">名称</div>
<div class="t th" style="left:682.6px;top:198.6px">检索字符</div>
<div class="t th" style="left:814.8px;top:198.6px">地址</div>
<div class="t th" style="left:946.8px;top:198.6px">目录</div>
<div class="t th" style="left:999.9px;top:198.6px">类型</div>
<div class="t th" style="left:1053.0px;top:198.6px">排序</div>
<div class="t th" style="left:1105.9px;top:198.6px">启用</div>
<div class="t th" style="left:1157.9px;top:198.6px">可见</div>
<div class="t th" style="left:1223.9px;top:198.6px">缓存</div>
<div class="t tb" style="left:385.5px;top:228.5px">1</div>
<div class="t tb" style="left:419.1px;top:228.5px"><span class="lat" style="transform:scaleX(1.03)">CompanyManage</span></div>
<div class="t tb" style="left:550.8px;top:228.5px">公司管理</div>
<div class="t tb" style="left:682.6px;top:228.5px"><span class="lat" style="transform:scaleX(1.03)">gsgl,gongsiguanli</span></div>
<div class="t tb" style="left:814.8px;top:228.5px"><span class="lat" style="transform:scaleX(1.03)">/OrganizationModule/C···</span></div>
<div class="t tb" style="left:946.8px;top:228.5px">功能···</div>
<div class="t tb" style="left:999.9px;top:228.5px"><span class="lat" style="transform:scaleX(1.03)">PC</span></div>
<div class="t tb" style="left:1053.0px;top:228.5px"><span class="lat" style="transform:scaleX(1.03)">9</span></div>
<div class="a" style="left:1105.2px;top:227.2px;width:19.8px;height:10.4px;border-radius:5.2px;background:#409eff"></div>
<div class="a" style="left:1115.6px;top:228.2px;width:8.4px;height:8.4px;border-radius:50%;background:#fff"></div>
<div class="a" style="left:1157.7px;top:227.2px;width:19.8px;height:10.4px;border-radius:5.2px;background:#409eff"></div>
<div class="a" style="left:1168.1px;top:228.2px;width:8.4px;height:8.4px;border-radius:50%;background:#fff"></div>
<div class="a" style="left:1224.0px;top:227.2px;width:19.8px;height:10.4px;border-radius:5.2px;background:#409eff"></div>
<div class="a" style="left:1234.4px;top:228.2px;width:8.4px;height:8.4px;border-radius:50%;background:#fff"></div>
<div class="t tb" style="left:385.5px;top:258.2px">2</div>
<div class="t tb" style="left:419.1px;top:258.2px"><span class="lat" style="transform:scaleX(1.03)">DepartmentManage</span></div>
<div class="t tb" style="left:550.8px;top:258.2px">部门管理</div>
<div class="t tb" style="left:682.6px;top:258.2px"><span class="lat" style="transform:scaleX(1.03)">bmgl,bumenguanli</span></div>
<div class="t tb" style="left:814.8px;top:258.2px"><span class="lat" style="transform:scaleX(1.03)">/OrganizationModule/D···</span></div>
<div class="t tb" style="left:946.8px;top:258.2px">功能···</div>
<div class="t tb" style="left:999.9px;top:258.2px"><span class="lat" style="transform:scaleX(1.03)">PC</span></div>
<div class="t tb" style="left:1053.0px;top:258.2px"><span class="lat" style="transform:scaleX(1.03)">9</span></div>
<div class="a" style="left:1105.2px;top:256.9px;width:19.8px;height:10.4px;border-radius:5.2px;background:#409eff"></div>
<div class="a" style="left:1115.6px;top:257.9px;width:8.4px;height:8.4px;border-radius:50%;background:#fff"></div>
<div class="a" style="left:1157.7px;top:256.9px;width:19.8px;height:10.4px;border-radius:5.2px;background:#409eff"></div>
<div class="a" style="left:1168.1px;top:257.9px;width:8.4px;height:8.4px;border-radius:50%;background:#fff"></div>
<div class="a" style="left:1224.0px;top:256.9px;width:19.8px;height:10.4px;border-radius:5.2px;background:#409eff"></div>
<div class="a" style="left:1234.4px;top:257.9px;width:8.4px;height:8.4px;border-radius:50%;background:#fff"></div>
<div class="t tb" style="left:385.5px;top:288.0px">3</div>
<div class="t tb" style="left:419.1px;top:288.0px"><span class="lat" style="transform:scaleX(1.03)">PostManage3</span></div>
<div class="t tb" style="left:550.8px;top:288.0px">岗位管理</div>
<div class="t tb" style="left:682.6px;top:288.0px"><span class="lat" style="transform:scaleX(1.03)">gwgl,gangweiguanli</span></div>
<div class="t tb" style="left:814.8px;top:288.0px"><span class="lat" style="transform:scaleX(1.03)">/OrganizationModule/Po···</span></div>
<div class="t tb" style="left:946.8px;top:288.0px">功能···</div>
<div class="t tb" style="left:999.9px;top:288.0px"><span class="lat" style="transform:scaleX(1.03)">PC</span></div>
<div class="t tb" style="left:1053.0px;top:288.0px"><span class="lat" style="transform:scaleX(1.03)">9</span></div>
<div class="a" style="left:1105.2px;top:286.7px;width:19.8px;height:10.4px;border-radius:5.2px;background:#409eff"></div>
<div class="a" style="left:1115.6px;top:287.7px;width:8.4px;height:8.4px;border-radius:50%;background:#fff"></div>
<div class="a" style="left:1157.7px;top:286.7px;width:19.8px;height:10.4px;border-radius:5.2px;background:#409eff"></div>
<div class="a" style="left:1168.1px;top:287.7px;width:8.4px;height:8.4px;border-radius:50%;background:#fff"></div>
<div class="a" style="left:1224.0px;top:286.7px;width:19.8px;height:10.4px;border-radius:5.2px;background:#409eff"></div>
<div class="a" style="left:1234.4px;top:287.7px;width:8.4px;height:8.4px;border-radius:50%;background:#fff"></div>
<div class="t tb" style="left:385.5px;top:317.6px">4</div>
<div class="t tb" style="left:419.1px;top:317.6px"><span class="lat" style="transform:scaleX(1.03)">RoleManage</span></div>
<div class="t tb" style="left:550.8px;top:317.6px">角色管理</div>
<div class="t tb" style="left:682.6px;top:317.6px"><span class="lat" style="transform:scaleX(1.03)">jsgl,jiaoseguanli</span></div>
<div class="t tb" style="left:814.8px;top:317.6px"><span class="lat" style="transform:scaleX(1.03)">/OrganizationModule/R···</span></div>
<div class="t tb" style="left:946.8px;top:317.6px">功能···</div>
<div class="t tb" style="left:999.9px;top:317.6px"><span class="lat" style="transform:scaleX(1.03)">PC</span></div>
<div class="t tb" style="left:1053.0px;top:317.6px"><span class="lat" style="transform:scaleX(1.03)">9</span></div>
<div class="a" style="left:1105.2px;top:316.3px;width:19.8px;height:10.4px;border-radius:5.2px;background:#409eff"></div>
<div class="a" style="left:1115.6px;top:317.3px;width:8.4px;height:8.4px;border-radius:50%;background:#fff"></div>
<div class="a" style="left:1157.7px;top:316.3px;width:19.8px;height:10.4px;border-radius:5.2px;background:#409eff"></div>
<div class="a" style="left:1168.1px;top:317.3px;width:8.4px;height:8.4px;border-radius:50%;background:#fff"></div>
<div class="a" style="left:1224.0px;top:316.3px;width:19.8px;height:10.4px;border-radius:5.2px;background:#409eff"></div>
<div class="a" style="left:1234.4px;top:317.3px;width:8.4px;height:8.4px;border-radius:50%;background:#fff"></div>
<div class="t tb" style="left:385.5px;top:347.4px">5</div>
<div class="t tb" style="left:419.1px;top:347.4px"><span class="lat" style="transform:scaleX(1.03)">UserManage</span></div>
<div class="t tb" style="left:550.8px;top:347.4px">用户管理</div>
<div class="t tb" style="left:682.6px;top:347.4px"><span class="lat" style="transform:scaleX(1.03)">yhgl,yonghuguanli</span></div>
<div class="t tb" style="left:814.8px;top:347.4px"><span class="lat" style="transform:scaleX(1.03)">/OrganizationModule/Us···</span></div>
<div class="t tb" style="left:946.8px;top:347.4px">功能···</div>
<div class="t tb" style="left:999.9px;top:347.4px"><span class="lat" style="transform:scaleX(1.03)">PC</span></div>
<div class="t tb" style="left:1053.0px;top:347.4px"><span class="lat" style="transform:scaleX(1.03)">9</span></div>
<div class="a" style="left:1105.2px;top:346.1px;width:19.8px;height:10.4px;border-radius:5.2px;background:#409eff"></div>
<div class="a" style="left:1115.6px;top:347.1px;width:8.4px;height:8.4px;border-radius:50%;background:#fff"></div>
<div class="a" style="left:1157.7px;top:346.1px;width:19.8px;height:10.4px;border-radius:5.2px;background:#409eff"></div>
<div class="a" style="left:1168.1px;top:347.1px;width:8.4px;height:8.4px;border-radius:50%;background:#fff"></div>
<div class="a" style="left:1224.0px;top:346.1px;width:19.8px;height:10.4px;border-radius:5.2px;background:#409eff"></div>
<div class="a" style="left:1234.4px;top:347.1px;width:8.4px;height:8.4px;border-radius:50%;background:#fff"></div>
<div class="t tb" style="left:385.5px;top:377.1px">6</div>
<div class="t tb" style="left:419.1px;top:377.1px"><span class="lat" style="transform:scaleX(1.03)">FormXABaseOrgDataOp···</span></div>
<div class="t tb" style="left:550.8px;top:377.1px">组织机构权限</div>
<div class="t tb" style="left:682.6px;top:377.1px"><span class="lat" style="transform:scaleX(1.03)">zzjgqx,zuzhijigouquanxian</span></div>
<div class="t tb" style="left:814.8px;top:377.1px"><span class="lat" style="transform:scaleX(1.03)">/XA_Base/XABaseOrgDa···</span></div>
<div class="t tb" style="left:946.8px;top:377.1px">功能···</div>
<div class="t tb" style="left:999.9px;top:377.1px"><span class="lat" style="transform:scaleX(1.03)">PC</span></div>
<div class="t tb" style="left:1053.0px;top:377.1px"><span class="lat" style="transform:scaleX(1.03)">9</span></div>
<div class="a" style="left:1105.2px;top:375.8px;width:19.8px;height:10.4px;border-radius:5.2px;background:#409eff"></div>
<div class="a" style="left:1115.6px;top:376.8px;width:8.4px;height:8.4px;border-radius:50%;background:#fff"></div>
<div class="a" style="left:1157.7px;top:375.8px;width:19.8px;height:10.4px;border-radius:5.2px;background:#409eff"></div>
<div class="a" style="left:1168.1px;top:376.8px;width:8.4px;height:8.4px;border-radius:50%;background:#fff"></div>
<div class="a" style="left:1224.0px;top:375.8px;width:19.8px;height:10.4px;border-radius:5.2px;background:#409eff"></div>
<div class="a" style="left:1234.4px;top:376.8px;width:8.4px;height:8.4px;border-radius:50%;background:#fff"></div>
<div class="a" style="left:1244.7px;top:188.3px;width:13px;height:380.4px;background:#fff"></div>

<!-- POPUP -->
<div class="a" style="left:952.4px;top:34.4px;width:296px;height:336.4px;background:#fff;border-radius:3px;box-shadow:0 1px 8px rgba(0,0,0,0.12);border:0.7px solid #ebeef5"></div>
<svg style="left:1095px;top:30.5px" width="12" height="6" viewBox="0 0 12 6"><path d="M0 5.5 L6 0 L12 5.5 Z" fill="#fff"/><path d="M0.3 5.3 L6 0.2 L11.7 5.3" fill="none" stroke="#ebeef5" stroke-width="0.7"/></svg>
<div class="a" style="left:1094px;top:35.2px;width:14px;height:2px;background:#fff"></div>
<div class="t sm" style="left:961.3px;top:52.1px;color:#409eff">系统消息</div>
<div class="t sm" style="left:1024.6px;top:52.1px">聊天记录</div>
<div class="t sm" style="left:1087.8px;top:52.1px">联系人</div>
<svg style="left:1228.3px;top:48px" width="11" height="10.5" viewBox="0 0 11 10.5"><path d="M0.4 0.4 L10.6 10.1 M10.6 0.4 L0.4 10.1" stroke="#666" stroke-width="1.05"/></svg>
<div class="a" style="left:961px;top:68.4px;width:280px;height:1px;background:#e4e7ed"></div>
<div class="a" style="left:961px;top:67.6px;width:37px;height:1.8px;background:#409eff"></div>
<svg style="left:960.8px;top:88.8px" width="26.5" height="26.5" viewBox="0 0 26.5 26.5"><defs><clipPath id="cp102"><circle cx="13.25" cy="13.25" r="13.25"/></clipPath></defs><circle cx="13.25" cy="13.25" r="13.25" fill="#e0effb"/><g clip-path="url(#cp102)"><path d="M7.8 12 C7.8 17.5 10.5 20.8 13.3 21.2 C16.5 20.8 19.2 17.5 19.6 13 L19.6 9 L8 9 Z" fill="#fbf6f3"/><path d="M11 19 L15.6 19 L15.4 25.5 L11.2 25.5 Z" fill="#fbf6f3"/><path d="M6.5 27 C7.5 25 9.5 24.6 11.6 24.6 L13.3 26.2 L15 24.6 C17 24.6 19 25 20 27 Z" fill="#a8d2f4"/><path d="M13.3 26.2 L11.8 24.8 L14.8 24.8 Z" fill="#fff"/><path d="M7.2 14.8 C6.2 6.5 10.5 4 13.6 4 C17.6 4 20.8 7 19.8 14.8 C17 13.6 12.5 11.8 9.4 9.8 C8.7 11.6 8.1 13.2 7.2 14.8 Z" fill="#92bbd9"/></g></svg>
<div class="t sm" style="left:997.5px;top:90.8px;font-size:9px;letter-spacing:0.23px"><span style="color:#409eff">[新闻消息]</span>超级管理员</div>
<div class="t" style="left:997.5px;top:106.8px;font-size:7.92px;color:#909399">管理员2撤销新闻《文件验证新闻》</div>
<div class="t" style="left:1167.7px;top:98.9px;font-size:7.92px;color:#909399"><span class="lat" style="transform:scaleX(0.98)">2025-04-15 15:31:53</span></div>
<svg style="left:960.8px;top:136.8px" width="26.5" height="26.5" viewBox="0 0 26.5 26.5"><defs><clipPath id="cp150"><circle cx="13.25" cy="13.25" r="13.25"/></clipPath></defs><circle cx="13.25" cy="13.25" r="13.25" fill="#e0effb"/><g clip-path="url(#cp150)"><path d="M7.8 12 C7.8 17.5 10.5 20.8 13.3 21.2 C16.5 20.8 19.2 17.5 19.6 13 L19.6 9 L8 9 Z" fill="#fbf6f3"/><path d="M11 19 L15.6 19 L15.4 25.5 L11.2 25.5 Z" fill="#fbf6f3"/><path d="M6.5 27 C7.5 25 9.5 24.6 11.6 24.6 L13.3 26.2 L15 24.6 C17 24.6 19 25 20 27 Z" fill="#a8d2f4"/><path d="M13.3 26.2 L11.8 24.8 L14.8 24.8 Z" fill="#fff"/><path d="M7.2 14.8 C6.2 6.5 10.5 4 13.6 4 C17.6 4 20.8 7 19.8 14.8 C17 13.6 12.5 11.8 9.4 9.8 C8.7 11.6 8.1 13.2 7.2 14.8 Z" fill="#92bbd9"/></g></svg>
<div class="t sm" style="left:997.5px;top:138.8px;font-size:9px;letter-spacing:0.23px"><span style="color:#409eff">[新闻消息]</span>超级管理员</div>
<div class="t" style="left:997.5px;top:154.8px;font-size:7.92px;color:#909399">超级管理员发布新闻《testnew1》</div>
<div class="t" style="left:1167.7px;top:146.9px;font-size:7.92px;color:#909399"><span class="lat" style="transform:scaleX(0.98)">2025-04-14 10:47:11</span></div>
<div class="a" style="left:961px;top:125.2px;width:280px;height:0.8px;background:#ebeef5"></div>
<div class="a" style="left:960.6px;top:342.2px;width:280.3px;height:0.8px;background:#ebeef5"></div>
<div class="t" style="left:961px;top:351.8px;font-size:8.6px;color:#303133">查看消息记录</div>
<div class="t" style="left:1185.4px;top:351.8px;font-size:8.6px;color:#303133">清空未读消息</div>

</div>
</body></html>
